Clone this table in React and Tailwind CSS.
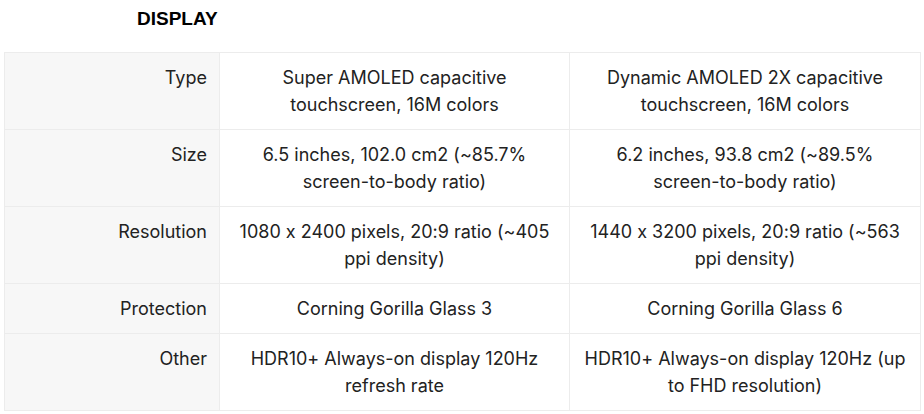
export default function App() {
  const rows = [
    ["Type", ["Super AMOLED capacitive", "touchscreen, 16M colors"], ["Dynamic AMOLED 2X capacitive", "touchscreen, 16M colors"]],
    ["Size", ["6.5 inches, 102.0 cm2 (~85.7%", "screen-to-body ratio)"], ["6.2 inches, 93.8 cm2 (~89.5%", "screen-to-body ratio)"]],
    ["Resolution", ["1080 x 2400 pixels, 20:9 ratio (~405", "ppi density)"], ["1440 x 3200 pixels, 20:9 ratio (~563", "ppi density)"]],
    ["Protection", ["Corning Gorilla Glass 3"], ["Corning Gorilla Glass 6"]],
    ["Other", ["HDR10+ Always-on display 120Hz", "refresh rate"], ["HDR10+ Always-on display 120Hz (up", "to FHD resolution)"]],
  ];
  const Lines = ({ lines }) => lines.map((l, i) => (
    <div key={i} className="whitespace-nowrap">{l}</div>
  ));
  return (
    <div className="w-[924px] h-[414px] bg-white overflow-hidden">
      <div className="pl-[137px] pt-[8px] h-[52px] text-[19px] font-bold text-black leading-[21px]" style={{ fontFamily: '"Liberation Sans", Arial, sans-serif' }}>
        DISPLAY
      </div>
      <table className="ml-[4px] w-[916px] border-collapse table-fixed text-[18px] leading-[27px] text-[#222] [font-feature-settings:'calt'_0]" style={{ fontFamily: 'Inter, "Noto Sans", sans-serif' }}>
        <colgroup>
          <col className="w-[215px]" />
          <col className="w-[350px]" />
          <col className="w-[351px]" />
        </colgroup>
        <tbody>
          {rows.map((r) => (
            <tr key={r[0]}>
              <td className="border border-[#ececec] bg-[#f7f7f7] text-right align-top pr-[12px] py-[11px]">{r[0]}</td>
              <td className="border border-[#ececec] text-center align-top px-[6px] py-[11px]"><Lines lines={r[1]} /></td>
              <td className="border border-[#ececec] text-center align-top px-[6px] py-[11px]"><Lines lines={r[2]} /></td>
            </tr>
          ))}
        </tbody>
      </table>
    </div>
  );
}
